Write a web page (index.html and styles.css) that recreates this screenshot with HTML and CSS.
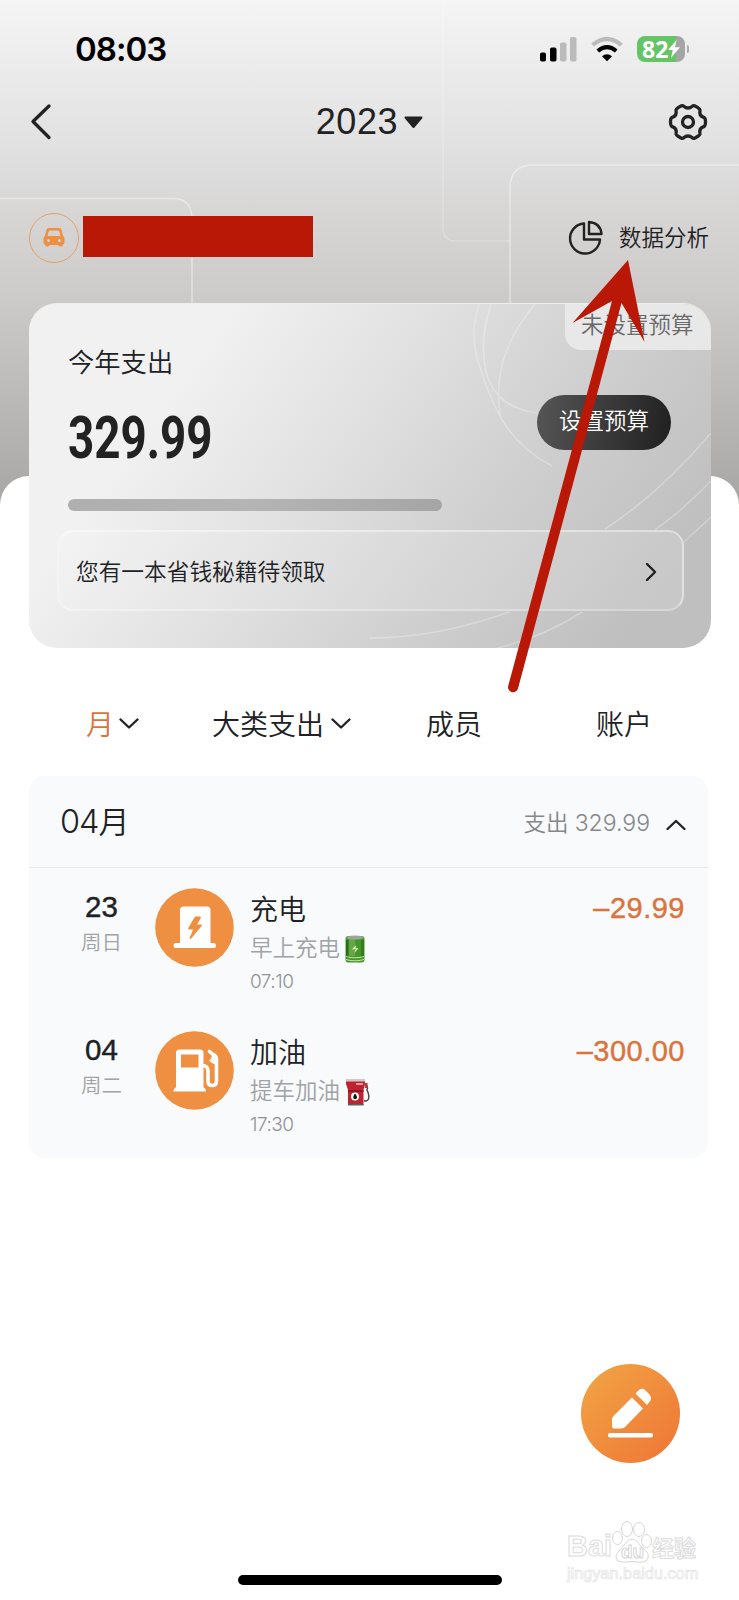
FILE: index.html
```html
<!DOCTYPE html>
<html lang="zh-CN">
<head>
<meta charset="utf-8">
<title>2023</title>
<link rel="stylesheet" href="styles.css">
</head>
<body>
<div class="phone">
  <svg class="backdrop" width="739" height="500" viewBox="0 0 739 500">
    <path d="M0 198.500H174Q192 199 192 220V303" class="pane"/>
    <path d="M443 0V230Q444 241 456 241H510" class="pane faint"/>
    <path d="M739 165H532Q510 166 510 188V303" class="pane"/>
  </svg>
  <div class="sheet"></div>

  <header class="status">
    <div class="clock">08:03</div>
    <div class="signals">
      <svg width="37" height="25" viewBox="0 0 37 25">
        <rect x="0" y="15.500" width="6" height="9" rx="1.800"/><rect x="10" y="10.500" width="6.500" height="14" rx="1.800"/>
        <rect x="20" y="5.500" width="6.500" height="19" rx="1.800" class="dim"/><rect x="30" y="0" width="6.500" height="24.500" rx="1.800" class="dim"/>
      </svg>
      <svg class="wifi" width="32" height="25" viewBox="0 0 32 25">
        <path d="M1.600 8Q16-4 30.400 8" class="arc dimarc"/><path d="M6.800 14Q16 6.200 25.200 14" class="arc"/>
        <path d="M11 19.300Q16 15 21 19.300L16 24.300Z"/>
      </svg>
      <div class="battery"><span>82</span>
        <svg width="12" height="18" viewBox="0 0 12 18"><path d="M8.500 0L0 10H4.800L3 18L12 7.200H7Z" fill="#fff"/></svg>
      </div>
      <div class="nub"></div>
    </div>
  </header>

  <nav class="nav">
    <svg class="back" width="22" height="38" viewBox="0 0 22 38"><path d="M20 3L4 18.500L20 34.500" class="line w35"/></svg>
    <div class="year">2023<svg width="19" height="13" viewBox="0 0 19 13"><path d="M1.500 1.500H17.500L9.500 11Z" fill="#222" stroke="#222" stroke-width="2" stroke-linejoin="round"/></svg></div>
    <svg width="42" height="42" viewBox="-21 -21 42 42">
      <path class="line w35" d="M15.800 4.600Q10.800 6.300 12 11.500Q12.600 13.300 6.500 16.200Q5.300 16.700 4.300 15.800Q0 12.300-4.300 15.800Q-5.300 16.700-6.500 16.200Q-12.600 13.300-12 11.500Q-10.800 6.300-15.800 4.600Q-17.500 4-17.500 0Q-17.500-4-15.800-4.600Q-10.800-6.300-12-11.500Q-12.600-13.300-6.500-16.200Q-5.300-16.700-4.300-15.800Q0-12.300 4.300-15.800Q5.300-16.700 6.500-16.200Q12.600-13.300 12-11.500Q10.800-6.300 15.800-4.600Q17.500-4 17.500 0Q17.500 4 15.800 4.600Z"/>
      <circle r="5.500" class="line w35"/>
    </svg>
  </nav>

  <div class="account">
    <div class="car"><svg width="22" height="19" viewBox="0 0 22 19">
      <path fill-rule="evenodd" d="M6 0H16Q18 0 18.600 2L20 7.500Q21.500 9 21.500 11V14.500Q21.500 16 20 16.500V17Q19.500 18.500 17.500 18.500Q16 18.500 15.500 17H6.500Q6 18.500 4.500 18.500Q2.500 18.500 2 17V16.500Q.5 16 .5 14.500V11Q.5 9 2 7.500L3.400 2Q4 0 6 0ZM7 2.500Q6 2.500 5.700 3.500L4.500 8H17.500L16.300 3.500Q16 2.500 15 2.500ZM5.500 11A1.500 1.500 0 1 0 5.500 14A1.500 1.500 0 1 0 5.500 11ZM16.500 11A1.500 1.500 0 1 0 16.500 14A1.500 1.500 0 1 0 16.500 11Z" fill="#ee8f42"/></svg></div>
    <div class="redact"></div>
    <div class="analysis">
      <svg width="34" height="36" viewBox="0 0 34 36">
        <path class="line w25" d="M15 3.500A15 15 0 1 0 31 19.500H15Z"/><path class="line w25" d="M20 2V14H32.500Q31.500 3 20 2Z"/>
      </svg>
      <span>数据分析</span>
    </div>
  </div>

  <section class="card">
    <svg class="rings" width="682" height="345" viewBox="0 0 682 345">
      <path d="M450 0Q440 32 450 60Q458 88 472 114Q490 145 523 162M462 0Q450 35 457 67Q465 103 508 109M506 0Q460 55 472 114"/>
      <path d="M682 129Q630 190 576 225M682 177Q655 205 626 226M682 213L655 238M553 308Q515 333 465 345M480 308C430 326 380 334 340 334"/>
    </svg>
    <div class="tag">未设置预算</div>
    <div class="summary">
      <div class="totals"><div class="label">今年支出</div><div class="sum">329.99</div></div>
      <div class="setbtn">设置预算</div>
    </div>
    <div class="bar"></div>
    <div class="tip"><span>您有一本省钱秘籍待领取</span>
      <svg width="12" height="20" viewBox="0 0 12 20"><path class="line w25" d="M2 3L10 11L2 19"/></svg></div>
  </section>

  <div class="tabs">
    <div class="tab on">月<svg width="20" height="13" viewBox="0 0 20 13"><path class="line w25" d="M1.500 2.500L10 10.500L18.500 2.500"/></svg></div>
    <div class="tab kind">大类支出<svg width="20" height="13" viewBox="0 0 20 13"><path class="line w25" d="M1.500 2.500L10 10.500L18.500 2.500"/></svg></div>
    <div class="tab member">成员</div>
    <div class="tab">账户</div>
  </div>

  <section class="list">
    <div class="month"><h2>04<span>月</span></h2><div class="spent">支出 <span>329.99</span></div>
      <svg width="20" height="13" viewBox="0 0 20 13"><path class="line w25" d="M1.500 11L10 3L18.500 11"/></svg></div>
    <article class="entry">
      <div class="date"><b>23</b><small>周日</small></div>
      <svg class="badge" width="79" height="79" viewBox="0 0 79 79"><circle cx="39.500" cy="39.500" r="39.300" fill="#ee8f42"/>
        <path d="M25 22Q25 18.500 28.500 18.500H52Q55.500 18.500 55.500 22V55H59Q61 55 61 57.500Q61 60 59 60H20.500Q18.500 60 18.500 57.500Q18.500 55 20.500 55H25Z" fill="#fff"/>
        <path d="M40.500 29.500L34 40.500H39.500L35.500 50L46 37.500H40.500L45 29.500Z" fill="#ee8f42" stroke="#ee8f42" stroke-width="1.800" stroke-linejoin="round"/></svg>
      <div class="info"><h3>充电</h3><p>早上充电<svg class="emoji" width="20" height="28" viewBox="0 0 20 28">
        <rect x=".5" y="1" width="19" height="26.500" rx="3" fill="#479628"/><rect x="4" y="3" width="6" height="18" fill="#64a843"/><rect x="1" y="5" width="2.500" height="18" fill="#286f20"/><rect x="16" y="5" width="3" height="18" fill="#337a21"/><ellipse cx="10" cy="2.500" rx="8.500" ry="2" fill="#9aa69a"/><path d="M1 21.500Q10 24 19 21.500M1 24.500Q10 27 19 24.500" fill="none" stroke="#c8dfac" stroke-width="1.200"/><path d="M11 10L7 14.500L10.500 14L9.500 18L13.500 13L10.500 13.500Z" fill="#e3f4cb"/></svg></p><time>07:10</time></div>
      <div class="amount">–29.99</div>
    </article>
    <article class="entry">
      <div class="date"><b>04</b><small>周二</small></div>
      <svg class="badge" width="79" height="79" viewBox="0 0 79 79"><circle cx="39.500" cy="39.500" r="39.300" fill="#ee8f42"/>
        <path d="M21 22Q21 18.500 24.500 18.500H45Q48.500 18.500 48.500 22V56.500Q51 57 51 60.500H18.500Q18.500 57 21 56.500Z" fill="#fff"/><rect x="26" y="23.500" width="17.500" height="13" fill="#ee8f42"/>
        <path d="M48 34.500Q53 35 53 40V50Q53 54.500 57.200 54.500Q61.500 54.500 61.500 50V28Q61.500 25 58 23.500L54.500 20.500" fill="none" stroke="#fff" stroke-width="3.600" stroke-linecap="round" stroke-linejoin="round"/><path d="M57 23L61.500 27V34Q57 33 54 29.500Q57 28 57 23Z" fill="#fff"/></svg>
      <div class="info"><h3>加油</h3><p>提车加油<svg class="emoji fuel" width="25" height="28" viewBox="0 0 25 28">
        <path d="M1 1H20V6L18.500 12V27H3V12L1 6Z" fill="#bd2430"/><path d="M1 1H20V3.500H1Z" fill="#d9c6ca"/><path d="M3 12H18.500V14H3Z" fill="#8e1721"/><path d="M11 5H18V7H11Z" fill="#ef9da3"/><path d="M3 26H18.500V27.500H3Z" fill="#615c62"/><circle cx="10" cy="18.500" r="4" fill="#fff"/><path d="M10 15.500Q13 19 11.500 20.500Q10 21.500 8.500 20.500Q7.500 18.500 10 15.500Z" fill="#111"/><path d="M20 6Q23.500 8 22 12Q24.500 17 23.500 21Q22 24 19 22.500" fill="none" stroke="#55464b" stroke-width="1.500"/><path d="M19.500 5H22.500V10H20Z" fill="#c13a43"/></svg></p><time>17:30</time></div>
      <div class="amount">–300.00</div>
    </article>
  </section>

  <div class="fab"><svg width="99" height="99" viewBox="0 0 99 99" fill="#fff">
    <path d="M51 33.500L62 44.500L45 62Q43 64.500 40 64.500H33Q31 64.500 31 62V56Q31 53.500 33 51.500Z"/>
    <path d="M54.500 29.500L58 26Q61 23.500 64 26L68.500 30.500Q71 33.500 69.500 36.500L66 41Z"/><rect x="27" y="69" width="45" height="4.500" rx="2"/></svg></div>

  <div class="mark">
    <div class="brand"><span class="bai">Bai</span><svg width="40" height="42" viewBox="0 0 40 42"><g class="paw"><ellipse cx="5.500" cy="17" rx="5" ry="6.500"/><ellipse cx="15" cy="8" rx="5.500" ry="7.500"/><ellipse cx="27" cy="8.500" rx="5.500" ry="7"/><ellipse cx="34.500" cy="20" rx="5" ry="6.500"/><path d="M20 18Q24 18 27 23Q30 27 35 31Q38 36 34 40Q31 42 20 40.500Q10 42 6 40Q2 36 6 31Q10 27 13 23Q16 18 20 18Z"/></g><text x="20.500" y="37" text-anchor="middle" class="du">du</text></svg><span class="jy">经验</span></div>
    <div class="url">jingyan.baidu.com</div>
  </div>
  <div class="home"></div>
  <svg class="arrow" width="80" height="440" viewBox="570 255 80 440"><path d="M628 260L644.500 342L621.500 303L518 688.500A5 5 0 0 1 508.200 686L612 301L572.500 323Z" fill="#b91806"/></svg>
</div>
</body>
</html>
```

FILE: styles.css
```css
* { box-sizing: border-box; }
body { margin: 0; background: #fff; }
svg { display: block; flex: none; overflow: visible; }
h2, h3, p { margin: 0; font-weight: 350; }
.phone {
  position: relative; width: 739px; height: 1600px; overflow: hidden; color: #202124;
  font-family: "Liberation Sans", "Noto Sans CJK SC", sans-serif; font-weight: 350; white-space: nowrap;
  background: linear-gradient(180deg, #f5f5f5 0, #ecebec 70px, #e3e2e3 140px, #d8d7d6 205px, #cdccca 290px, #bcbbb9 390px, #a9a7a5 500px);
}
.backdrop, .sheet, .rings { position: absolute; left: 0; top: 0; }
.sheet { top: 476px; width: 739px; height: 1124px; border-radius: 29px 29px 0 0; background: #fff; }
.pane { fill: none; stroke: rgba(255,255,255,.42); stroke-width: 1.500px; }
.faint { stroke: rgba(255,255,255,.22); }
.line { fill: none; stroke: #222; stroke-linecap: round; stroke-linejoin: round; }
.w35 { stroke-width: 3.300px; }
.w25 { stroke-width: 2.400px; }

.status, .nav, .account, .card, .tabs, .list { position: relative; }
.status { height: 98px; padding: 30px 50px 0 75px; display: flex; justify-content: space-between; }
.clock { font: 600 33px/39px Inter, sans-serif; letter-spacing: -1px; color: #000; }
.signals { display: flex; height: 38px; align-items: center; }
.dim { fill: #bcbbbc; }
.wifi { margin: 0 14px; }
.arc { fill: none; stroke: #000; stroke-width: 4.200px; }
.dimarc { stroke: #bcbbbc; }
.battery { display: flex; align-items: center; width: 48px; height: 26px; padding-left: 5px; border-radius: 8px; background: linear-gradient(90deg, #65c466 39px, #a5a5a5 39px); color: #fff; font: 700 23px/26px "Open Sans", sans-serif; }
.nub { width: 2px; height: 8px; margin-left: 2px; border-radius: 0 3px 3px 0; background: #aaa; }

.nav { height: 48px; padding: 0 30px 0 29px; display: flex; align-items: center; justify-content: space-between; }
.year { display: flex; align-items: center; gap: 6px; margin-left: 21px; font-size: 36px; letter-spacing: .6px; color: #222; }
.account { margin-top: 67px; height: 49px; padding: 0 30px 0 29px; display: flex; align-items: center; }
.car { display: flex; align-items: center; justify-content: center; width: 50px; height: 50px; border: 1.500px solid #e5a065; border-radius: 50%; }
.redact { width: 230px; height: 41px; margin: -3px 0 0 4px; background: #b91806; }
.analysis { margin-left: auto; display: flex; align-items: center; gap: 16px; font-size: 22.500px; }
.analysis span { padding-bottom: 4px; }

.card { width: 682px; height: 345px; margin: 41px 0 0 29px; border-radius: 28px; overflow: hidden; border-top: 1px solid #eee; background: linear-gradient(126deg, #f1f1f1 22%, #e1e1e1 44%, #cfcfcf 66%, #bfbfbf 90%); }
.rings path { fill: none; stroke: rgba(255,255,255,.28); stroke-width: 1.500px; }
.tag { position: absolute; right: 0; top: 0; width: 146px; height: 46px; padding-left: 16px; border-radius: 0 0 0 16px; background: #e8e8e8; color: #6a6a6a; font-size: 22.500px; line-height: 43px; }
.summary { position: relative; display: flex; justify-content: space-between; padding: 38px 40px 0 39px; height: 195px; }
.label { padding-top: 2px; font-size: 26.300px; line-height: 38px; }
.sum { margin-top: 26px; font: 700 59px/60px Roboto, sans-serif; transform: scaleX(.775); transform-origin: 0 50%; color: #222; }
.setbtn { width: 134px; height: 55px; margin-top: 53px; border-radius: 28px; background: linear-gradient(100deg, #565656, #202020); color: #fff; font-size: 22.500px; line-height: 53px; text-align: center; }
.bar { position: relative; width: 374px; height: 12px; margin-left: 39px; border-radius: 6px; background: linear-gradient(90deg, #afafaf, #b4b4b4 50%, #a5a5a5); }
.tip { position: relative; display: flex; align-items: center; justify-content: space-between; width: 627px; height: 81px; margin: 19px 0 0 28px; padding: 0 25px 0 17px; border: 2px solid; border-color: rgba(255,255,255,.4) rgba(255,255,255,.45) rgba(255,255,255,.28) rgba(255,255,255,.15); border-radius: 16px; background: rgba(255,255,255,.14); font-size: 22.700px; }

.tabs { display: flex; align-items: center; height: 56px; margin-top: 47px; padding-left: 86px; font-size: 28px; }
.tab { display: flex; align-items: center; gap: 5px; }
.on { color: #dc733a; width: 126px; }
.kind { width: 214px; gap: 7px; }
.member { width: 170px; }

.list { width: 679px; height: 382px; margin: 25px 0 0 29px; border-radius: 16px; background: #f8fafc; }
.month { display: flex; align-items: center; height: 92px; padding: 0 22px 0 31px; border-bottom: 1px solid #e6e8ea; }
.month h2 { font: 300 32.500px/46px Inter, "Noto Sans CJK SC", sans-serif; letter-spacing: -1px; }
.month h2 span { font-weight: 350; font-size: 31px; }
.month svg { margin: 5px 0 0 16px; }
.spent { margin-left: auto; color: #85878a; font-size: 22.500px; }
.spent span { font: 300 23px/30px Inter, sans-serif; }
.entry { display: flex; height: 143px; padding: 20px 23px 0 52px; }
.date { width: 43px; margin-right: 31px; }
.date b { display: block; padding-left: 4px; font-weight: 400; font-size: 29.500px; line-height: 38px; -webkit-text-stroke: .4px #202124; }
.date small { display: block; padding-top: 3px; font-size: 20.500px; line-height: 28px; color: #a0a2a5; }
.info { margin-left: 16px; padding-top: 2px; }
.info h3 { font-size: 28px; line-height: 42px; }
.info p { display: flex; align-items: center; gap: 5px; font-size: 22.500px; line-height: 34px; height: 34px; color: #a0a2a5; }
.info time { display: block; font: 300 19px/32px Inter, sans-serif; letter-spacing: -.5px; color: #909295; }
.amount { margin-left: auto; font-size: 29px; line-height: 41px; letter-spacing: .5px; color: #dc733a; -webkit-text-stroke: .4px #dc733a; }

.fab { position: absolute; left: 581px; top: 1364px; width: 99px; height: 99px; border-radius: 50%; background: linear-gradient(135deg, #f2a544, #ee7535); }
.mark { position: absolute; left: 567px; top: 1520px; color: #fff; -webkit-text-stroke: 1px #dcdcdc; }
.brand { display: flex; align-items: flex-end; height: 43px; }
.bai { width: 45px; font: 700 29px/33px "Liberation Sans", sans-serif; }
.paw { fill: #fff; stroke: #d8d8d8; }
.du { font: 700 19px "Liberation Sans", sans-serif; fill: #fff; stroke: #d8d8d8; stroke-width: 1px; }
.jy { font: 700 22px/34px "Noto Sans CJK SC", sans-serif; }
.url { font-size: 16.300px; line-height: 20px; -webkit-text-stroke: .7px #e4e4e4; }
.home { position: absolute; left: 238px; top: 1575px; width: 264px; height: 10px; border-radius: 5px; background: #000; }
.arrow { position: absolute; left: 570px; top: 255px; }
```
